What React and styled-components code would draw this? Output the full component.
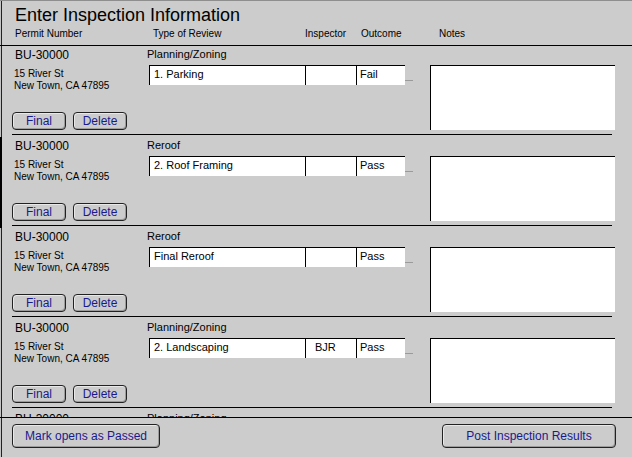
import React from "react";
import styled, { createGlobalStyle, css } from "styled-components";

const Global = createGlobalStyle`
  html, body { margin: 0; padding: 0; background: #cccccc; }
  body { font-family: "Liberation Sans", Arial, Helvetica, sans-serif; color: #000; }
  * { box-sizing: border-box; }
`;

const Window = styled.div`
  width: 632px;
  height: 457px;
  display: flex;
  flex-direction: column;
  border-top: 1px solid #8e8e8e;
  background: linear-gradient(to right, #c4c4c4 0 1px, #222 1px 2px, #cccccc 2px);
  overflow: hidden;
`;

const Header = styled.header`
  height: 45px;
  flex: none;
  padding: 3px 0 0 15px;
  border-bottom: 1px solid #000;
`;

const Title = styled.h1`
  margin: 0;
  font-size: 18px;
  line-height: 22px;
  font-weight: normal;
`;

const Labels = styled.div`
  display: flex;
  margin-top: 2px;
  font-size: 10px;
  line-height: 12px;
`;

const Label = styled.span`
  width: ${(p) => p.$w}px;
  flex: none;
`;

const List = styled.div`
  flex: 1;
  min-height: 0;
  overflow-y: clip;
  overflow-x: visible;
`;

const ListInner = styled.div`
  margin-top: -2px;
`;

const Row = styled.div`
  position: relative;
  display: flex;
  margin-left: 12px;
  width: 600px;
  height: 91px;
  padding: 4px 0;
  border-bottom: 1px solid #000;
  ${(p) =>
    p.$selected &&
    css`
      &::before {
        content: "";
        position: absolute;
        left: -12px;
        top: 2px;
        width: 2px;
        height: 91px;
        background: #000;
      }
    `}
`;

const LeftCol = styled.div`
  width: 135px;
  flex: none;
  display: flex;
  flex-direction: column;
`;

const Permit = styled.div`
  font-size: 12px;
  line-height: 14px;
  padding-left: 3px;
`;

const Address = styled.div`
  margin-top: 6px;
  font-size: 10px;
  line-height: 12px;
  padding-left: 2px;
`;

const ButtonRow = styled.div`
  margin-top: auto;
  display: flex;
  gap: 7px;
`;

const Button = styled.button`
  width: ${(p) => p.$w}px;
  height: ${(p) => p.$h}px;
  padding: 0;
  font-family: "Liberation Sans", Arial, Helvetica, sans-serif;
  font-size: 12px;
  color: #1a1a8c;
  background: #cccccc;
  border: 1px solid #222;
  border-radius: 4px;
  box-shadow: inset -1px -1px 0 #9c9c9c, inset 1px 1px 0 #e8e8e8;
  cursor: pointer;
`;

const MidCol = styled.div`
  width: 283px;
  flex: none;
  display: flex;
  flex-direction: column;
`;

const ReviewType = styled.div`
  margin-top: -1px;
  font-size: 11px;
  line-height: 14px;
`;

const Fields = styled.div`
  display: flex;
  margin: 4px 0 0 2px;
`;

const Cell = styled.div`
  width: ${(p) => p.$w}px;
  height: 20px;
  flex: none;
  background: #fff;
  border-top: 1px solid #000;
  border-left: 1px solid #000;
  padding: 1px 0 0 ${(p) => p.$pad}px;
  font-size: 11px;
  line-height: 14px;
  white-space: nowrap;
`;

const Dash = styled.div`
  width: 8px;
  height: 1px;
  margin-top: 15px;
  background: #9a9a9a;
`;

const Notes = styled.div`
  width: 185px;
  height: 65px;
  flex: none;
  margin-top: 17px;
  background: #fff;
  border-top: 1px solid #000;
  border-left: 1px solid #000;
`;

const Footer = styled.footer`
  flex: none;
  height: 40px;
  border-top: 1px solid #000;
  padding: 6px 16px 0 12px;
  display: flex;
  justify-content: space-between;
  align-items: flex-start;
`;

const rows = [
  { type: "Planning/Zoning", item: "1. Parking", inspector: "", outcome: "Fail" },
  { type: "Reroof", item: "2. Roof Framing", inspector: "", outcome: "Pass", selected: true },
  { type: "Reroof", item: "Final Reroof", inspector: "", outcome: "Pass" },
  { type: "Planning/Zoning", item: "2. Landscaping", inspector: "BJR", outcome: "Pass" },
  { type: "Planning/Zoning", item: "1. Parking", inspector: "", outcome: "Pass" },
];

export default function App() {
  return (
    <>
      <Global />
      <Window>
        <Header>
          <Title>Enter Inspection Information</Title>
          <Labels>
            <Label $w={138}>Permit Number</Label>
            <Label $w={152}>Type of Review</Label>
            <Label $w={56}>Inspector</Label>
            <Label $w={78}>Outcome</Label>
            <Label $w={60}>Notes</Label>
          </Labels>
        </Header>
        <List>
          <ListInner>
            {rows.map((r, i) => (
              <Row key={i} $selected={r.selected}>
                <LeftCol>
                  <Permit>BU-30000</Permit>
                  <Address>
                    15 River St
                    <br />
                    New Town, CA 47895
                  </Address>
                  <ButtonRow>
                    <Button $w={54} $h={18}>Final</Button>
                    <Button $w={54} $h={18}>Delete</Button>
                  </ButtonRow>
                </LeftCol>
                <MidCol>
                  <ReviewType>{r.type}</ReviewType>
                  <Fields>
                    <Cell $w={156} $pad={4}>{r.item}</Cell>
                    <Cell $w={51} $pad={9}>{r.inspector}</Cell>
                    <Cell $w={49} $pad={3}>{r.outcome}</Cell>
                    <Dash />
                  </Fields>
                </MidCol>
                <Notes />
              </Row>
            ))}
          </ListInner>
        </List>
        <Footer>
          <Button $w={148} $h={24}>Mark opens as Passed</Button>
          <Button $w={174} $h={24}>Post Inspection Results</Button>
        </Footer>
      </Window>
    </>
  );
}
